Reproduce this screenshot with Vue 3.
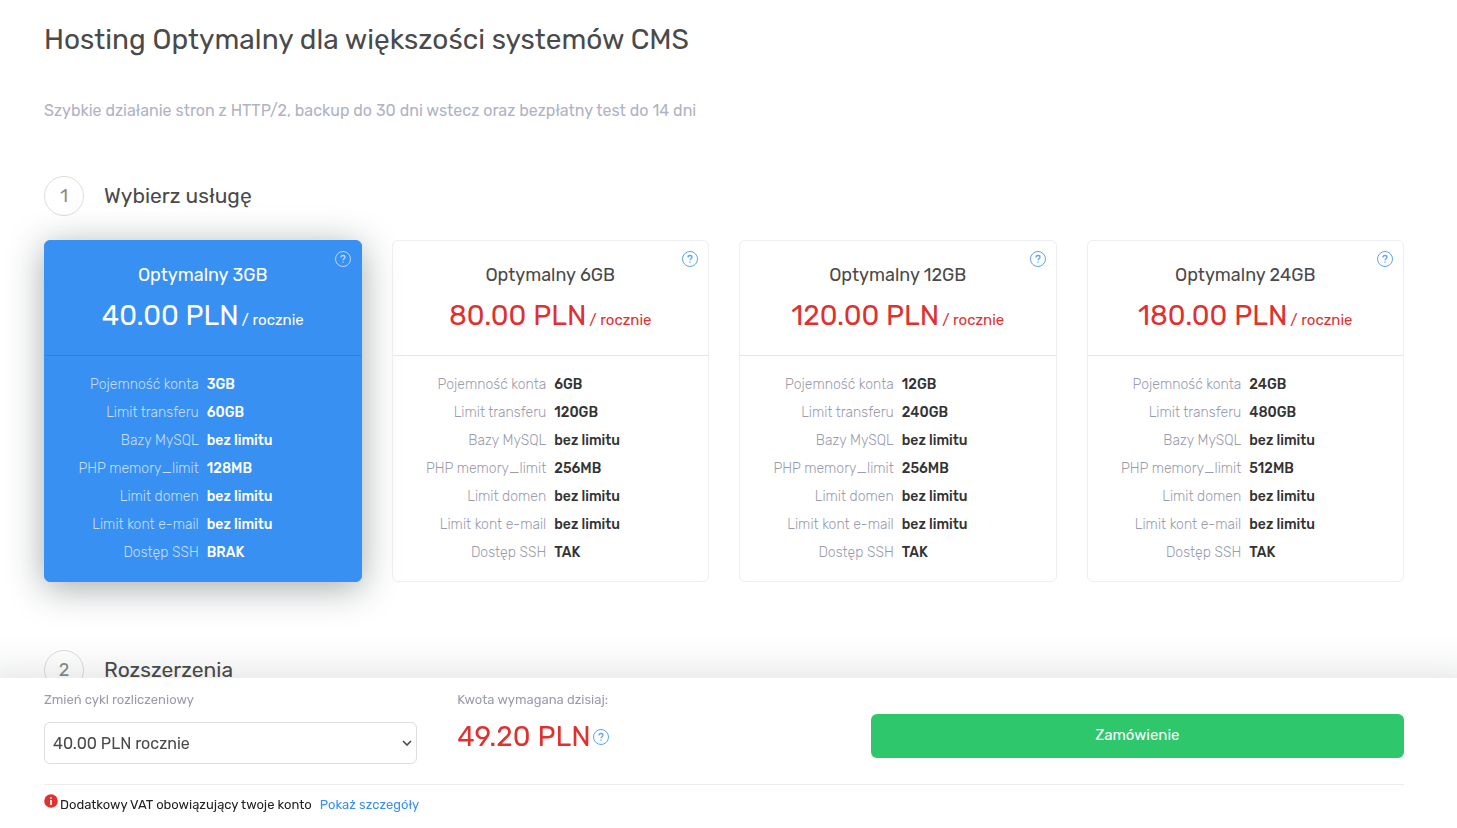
<script setup>
import { ref, computed } from "vue";

const labels = [
  "Pojemność konta",
  "Limit transferu",
  "Bazy MySQL",
  "PHP memory_limit",
  "Limit domen",
  "Limit kont e-mail",
  "Dostęp SSH",
];

const plans = [
  {
    name: "Optymalny 3GB",
    price: "40.00",
    total: "49.20",
    values: ["3GB", "60GB", "bez limitu", "128MB", "bez limitu", "bez limitu", "BRAK"],
  },
  {
    name: "Optymalny 6GB",
    price: "80.00",
    total: "98.40",
    values: ["6GB", "120GB", "bez limitu", "256MB", "bez limitu", "bez limitu", "TAK"],
  },
  {
    name: "Optymalny 12GB",
    price: "120.00",
    total: "147.60",
    values: ["12GB", "240GB", "bez limitu", "256MB", "bez limitu", "bez limitu", "TAK"],
  },
  {
    name: "Optymalny 24GB",
    price: "180.00",
    total: "221.40",
    values: ["24GB", "480GB", "bez limitu", "512MB", "bez limitu", "bez limitu", "TAK"],
  },
];

const selected = ref(0);
const cycle = ref("year");

const plan = computed(() => plans[selected.value]);
</script>

<template>
  <main class="page">
    <h1>Hosting Optymalny dla większości systemów CMS</h1>
    <p class="lead">
      Szybkie działanie stron z HTTP/2, backup do 30 dni wstecz oraz bezpłatny test do 14 dni
    </p>

    <h2 class="step"><span class="step-number">1</span>Wybierz usługę</h2>
    <div class="plans">
      <article
        v-for="(item, index) in plans"
        :key="item.name"
        class="plan"
        :class="{ active: index === selected }"
        @click="selected = index"
      >
        <button type="button" class="help plan-help" aria-label="Pomoc">
          <svg viewBox="0 0 16 16" width="16" height="16">
            <circle cx="8" cy="8" r="7.5" />
            <path d="M6 6.5C6 5.2 6.800 4.500 8 4.500s2 .7 2 1.800c0 1.400-2 1.400-2 3M8 10.400v1.400" />
          </svg>
        </button>
        <header class="plan-head">
          <h3>{{ item.name }}</h3>
          <p class="price">{{ item.price }} PLN <small>/ rocznie</small></p>
        </header>
        <dl class="specs">
          <template v-for="(label, i) in labels" :key="label">
            <dt>{{ label }}</dt>
            <dd>{{ item.values[i] }}</dd>
          </template>
        </dl>
      </article>
    </div>

    <h2 class="step"><span class="step-number">2</span>Rozszerzenia</h2>
  </main>

  <footer class="summary">
    <div class="summary-row">
      <div>
        <label class="caption" for="cycle">Zmień cykl rozliczeniowy</label>
        <div class="select">
          <select id="cycle" v-model="cycle">
            <option value="year">{{ plan.price }} PLN rocznie</option>
          </select>
          <svg class="arrow" viewBox="0 0 10 6" width="10" height="6">
            <path d="M1 1l4 4 4-4" />
          </svg>
        </div>
      </div>
      <div>
        <p class="caption">Kwota wymagana dzisiaj:</p>
        <p class="total">
          {{ plan.total }} PLN
          <button type="button" class="help" aria-label="Pomoc">
            <svg viewBox="0 0 16 16" width="16" height="16">
              <circle cx="8" cy="8" r="7.5" />
              <path d="M6 6.5C6 5.2 6.800 4.500 8 4.500s2 .7 2 1.800c0 1.400-2 1.400-2 3M8 10.400v1.400" />
            </svg>
          </button>
        </p>
      </div>
      <button type="button" class="order">Zamówienie</button>
    </div>
    <p class="vat">
      <svg class="info" viewBox="0 0 14 14" width="14" height="14">
        <circle cx="7" cy="7" r="6.800" />
        <path d="M7 3.300v1.500M7 6v4.500" />
        <path class="serif" d="M6 6.400h1M6 10.200h2" />
      </svg>
      <span>Dodatkowy VAT obowiązujący twoje konto</span>
      <a href="#">Pokaż szczegóły</a>
    </p>
  </footer>
</template>

<style>
body {
  margin: 0;
  background: #fff;
}
</style>

<style scoped>
.page,
.summary {
  font-family: Rubik, Roboto, "Liberation Sans", sans-serif;
  color: #4a4a4a;
  box-sizing: border-box;
  padding: 0 53px 0 44px;
}
h1,
h2,
h3,
p,
dl,
dd {
  margin: 0;
  font-weight: 400;
}
button,
select {
  font-family: inherit;
}
h1 {
  padding-top: 20px;
  font-size: 28px;
  line-height: 40px;
}
.lead {
  margin-top: 39px;
  font-size: 16px;
  line-height: 24px;
  color: #b0b3c3;
}
.step {
  display: flex;
  align-items: center;
  gap: 20px;
  margin-top: 53px;
  font-size: 21px;
  line-height: 40px;
}
.plans + .step {
  margin-top: 68px;
}
.step-number {
  box-sizing: border-box;
  width: 40px;
  height: 40px;
  border: 1px solid #ddd;
  border-radius: 50%;
  font-size: 18px;
  line-height: 38px;
  text-align: center;
  color: #8b8b86;
}
.plans {
  display: grid;
  grid-template-columns: repeat(4, 1fr);
  gap: 30px;
  margin-top: 24px;
}
.plan {
  position: relative;
  border: 1px solid #eee;
  border-radius: 6px;
  cursor: pointer;
}
.plan-head {
  padding: 20px 16px 19px;
  border-bottom: 1px solid #e6e6e6;
  text-align: center;
}
h3 {
  font-size: 18px;
  line-height: 28px;
}
.price {
  margin-top: 7px;
  font-size: 28px;
  line-height: 40px;
  color: #e03131;
}
.price small {
  margin-left: -4px;
  font-size: 15px;
  line-height: 20px;
}
.specs {
  display: grid;
  grid-template-columns: 1fr 1fr;
  column-gap: 8px;
  padding: 15px 0 14px;
  font-size: 14px;
  line-height: 28px;
}
dt {
  text-align: right;
  font-weight: 300;
  color: #9a9cad;
}
dd {
  font-weight: 500;
  color: #333;
}
.plan.active {
  background: #3990f3;
  border-color: #3990f3;
  box-shadow: 0 6px 36px rgba(30, 40, 45, 0.4);
  color: #fff;
}
.active .plan-head {
  border-color: #3282dc;
}
.active .price,
.active dd {
  color: #fff;
}
.active dt {
  color: #c4defb;
}
.help {
  display: inline-flex;
  padding: 0;
  border: 0;
  background: none;
  color: #5ba5f2;
  cursor: pointer;
}
.help svg,
.arrow {
  fill: none;
  stroke: currentColor;
}
.help path {
  stroke-width: 1.3;
}
.plan-help {
  position: absolute;
  top: 10px;
  right: 10px;
}
.active .help {
  color: #b6d8fb;
}
.summary {
  position: fixed;
  left: 0;
  right: 0;
  bottom: 0;
  background: #fff;
  box-shadow: 0 20px 40px 20px rgba(40, 50, 50, 0.18);
}
.summary-row {
  display: grid;
  grid-template-columns: 7fr 7fr 10fr;
  column-gap: 40px;
  padding: 12px 0 20px;
  border-bottom: 1px solid #ececec;
}
.caption {
  display: block;
  font-size: 13px;
  line-height: 20px;
  color: #9a9cad;
}
.select {
  position: relative;
  margin-top: 12px;
}
select {
  display: block;
  width: 100%;
  height: 42px;
  padding: 0 30px 0 8px;
  border: 1px solid #ddd;
  border-radius: 6px;
  appearance: none;
  background: #fff;
  font-size: 16px;
  color: #4a4a4a;
}
.arrow {
  position: absolute;
  top: 18px;
  right: 5px;
  stroke-width: 1.6;
  pointer-events: none;
}
.total {
  display: flex;
  align-items: center;
  gap: 2px;
  margin-top: 7px;
  font-size: 28px;
  line-height: 40px;
  color: #e03131;
}
.order {
  height: 44px;
  margin-top: 24px;
  padding: 0 0 2px;
  border: 0;
  border-radius: 6px;
  background: #2ec76c;
  font-size: 15px;
  line-height: 20px;
  color: #fff;
  cursor: pointer;
}
.vat {
  display: flex;
  align-items: flex-start;
  padding: 9px 0 12px;
  font-size: 13px;
  line-height: 22px;
  color: #222;
}
.info {
  fill: #e03131;
  margin-right: 2px;
}
.info path {
  fill: none;
  stroke: #fff;
  stroke-width: 1.6;
}
.info .serif {
  stroke-width: 1;
}
.vat a {
  margin-left: 8px;
  color: #3990f3;
  text-decoration: none;
}
</style>
